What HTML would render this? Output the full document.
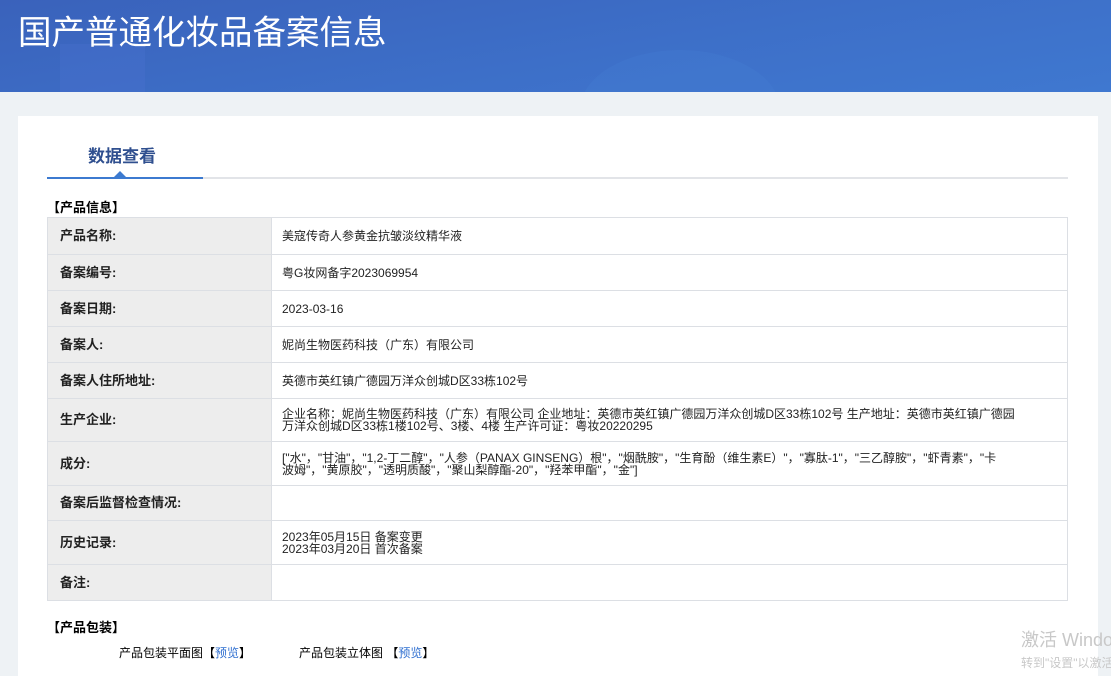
<!DOCTYPE html>
<html><head><meta charset="utf-8"><style>
*{margin:0;padding:0;box-sizing:border-box}
body{width:1111px;height:669px;overflow:hidden;background:#eef2f5;font-family:"Liberation Sans","Noto Sans CJK SC",sans-serif;position:relative}
.hd{position:absolute;left:0;top:0;width:1111px;height:92px;background:linear-gradient(170deg,#3a62bb 0%,#3d6fc8 55%,#3f78d0 100%);overflow:hidden}
.hd h1{position:absolute;left:18px;top:5px;color:#fff;font-size:33.5px;font-weight:normal;font-family:"Liberation Sans","Noto Sans CJK SC",sans-serif}
.blob1{position:absolute;left:60px;top:44px;width:85px;height:60px;background:rgba(90,120,220,.18)}
.blob2{position:absolute;left:580px;top:50px;width:200px;height:120px;border-radius:50%;background:rgba(80,140,220,.15)}
.panel{position:absolute;left:18px;top:116px;width:1080px;height:560px;background:#fff}
.tab{position:absolute;left:88px;top:142px;font-size:17px;font-weight:bold;color:#2f4f8f}
.line{position:absolute;left:47px;top:177px;width:1021px;height:2px;background:#e2e4e8}
.line b{position:absolute;left:0;top:0;width:156px;height:2px;background:#3c7ad0}
.tri{position:absolute;left:114px;top:171px;width:0;height:0;border-left:6px solid transparent;border-right:6px solid transparent;border-bottom:6px solid #3c7ad0}
.sec{position:absolute;left:47px;font-size:13px;font-weight:bold;color:#000;line-height:15px}
table{position:absolute;left:47px;top:217px;width:1021px;border-collapse:collapse;border:1px solid #a9bde6;font-size:12px}
td{border:1px solid #dcdfe4;vertical-align:middle;line-height:12px}
td.l{width:224px;background:#ededed;font-weight:bold;font-size:13px;padding-left:12px;color:#222}
td.v{padding-left:10px;color:#222}
.pk{position:absolute;top:644px;font-size:12px;color:#000}
.pk a{color:#2f6fd0;text-decoration:none}
.wm{position:absolute;left:1021px;top:626px;color:#c8c8c8;font-size:18px;white-space:nowrap}
.wm2{position:absolute;left:1021px;top:654px;color:#c8c8c8;font-size:12px;white-space:nowrap}
</style></head><body>
<div class="hd"><div class="blob1"></div><div class="blob2"></div><h1>国产普通化妆品备案信息</h1></div>
<div class="panel"></div>
<div class="tab">数据查看</div>
<div class="line"><b></b></div>
<div class="tri"></div>
<div class="sec" style="top:200px">【产品信息】</div>
<table>
<tr style="height:37px"><td class="l">产品名称:</td><td class="v">美寇传奇人参黄金抗皱淡纹精华液</td></tr>
<tr style="height:36px"><td class="l">备案编号:</td><td class="v">粤G妆网备字2023069954</td></tr>
<tr style="height:36px"><td class="l">备案日期:</td><td class="v">2023-03-16</td></tr>
<tr style="height:36px"><td class="l">备案人:</td><td class="v">妮尚生物医药科技（广东）有限公司</td></tr>
<tr style="height:36px"><td class="l">备案人住所地址:</td><td class="v">英德市英红镇广德园万洋众创城D区33栋102号</td></tr>
<tr style="height:43px"><td class="l">生产企业:</td><td class="v">企业名称：妮尚生物医药科技（广东）有限公司 企业地址：英德市英红镇广德园万洋众创城D区33栋102号 生产地址：英德市英红镇广德园<br>万洋众创城D区33栋1楼102号、3楼、4楼 生产许可证：粤妆20220295</td></tr>
<tr style="height:44px"><td class="l">成分:</td><td class="v">["水"，"甘油"，"1,2-丁二醇"，"人参（PANAX GINSENG）根"，"烟酰胺"，"生育酚（维生素E）"，"寡肽-1"，"三乙醇胺"，"虾青素"，"卡<br>波姆"，"黄原胶"，"透明质酸"，"聚山梨醇酯-20"，"羟苯甲酯"，"金"]</td></tr>
<tr style="height:35px"><td class="l">备案后监督检查情况:</td><td class="v"></td></tr>
<tr style="height:44px"><td class="l">历史记录:</td><td class="v">2023年05月15日 备案变更<br>2023年03月20日 首次备案</td></tr>
<tr style="height:36px"><td class="l">备注:</td><td class="v"></td></tr>
</table>
<div class="sec" style="top:620px">【产品包装】</div>
<div class="pk" style="left:119px">产品包装平面图【<a>预览</a>】</div>
<div class="pk" style="left:299px">产品包装立体图 【<a>预览</a>】</div>
<div class="wm">激活 Windows</div>
<div class="wm2">转到"设置"以激活</div>
</body></html>
